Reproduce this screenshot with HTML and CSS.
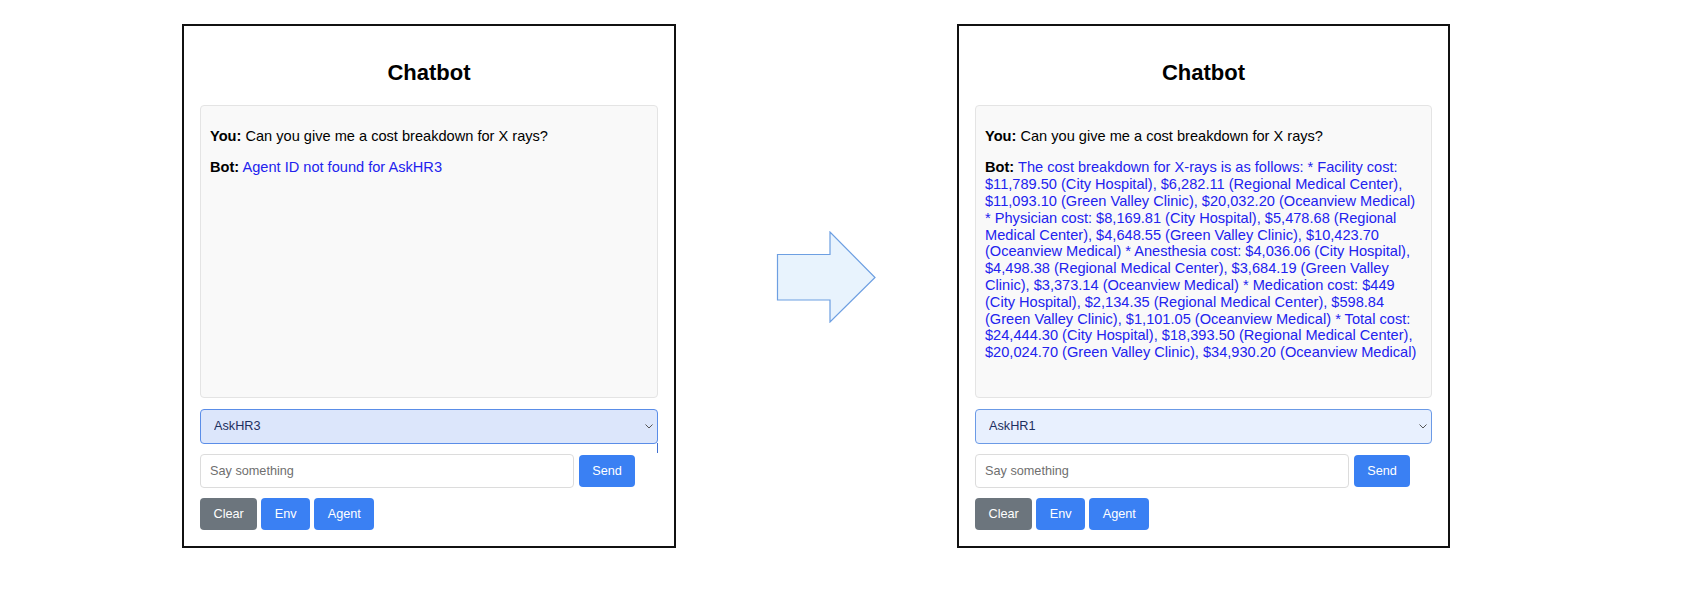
FILE: index.html
```html
<!DOCTYPE html>
<html lang="en">
<head>
<meta charset="utf-8">
<title>Chatbot comparison</title>
<link rel="stylesheet" href="styles.css">
</head>
<body>
<div class="stage">
  <section class="panel">
    <h2 class="title">Chatbot</h2>
    <div class="chat">
      <p class="msg"><b>You:</b> Can you give me a cost breakdown for X rays?</p>
      <p class="msg"><b>Bot:</b> <span class="bot">Agent ID not found for AskHR3</span></p>
    </div>
    <div class="select-wrap focused">
      <select class="agent-select focus-bg"><option>AskHR3</option></select>
      <svg class="chev" width="8" height="5" viewBox="0 0 8 5"><path d="M0.5 0.5 L4 4 L7.5 0.5" fill="none" stroke="#555" stroke-width="1"/></svg>
    </div>
    <div class="input-row">
      <input class="say" type="text" placeholder="Say something">
      <button class="btn primary">Send</button>
    </div>
    <div class="btn-row">
      <button class="btn secondary">Clear</button>
      <button class="btn primary">Env</button>
      <button class="btn primary">Agent</button>
    </div>
  </section>

  <svg class="arrow" width="100" height="92" viewBox="0 0 100 92">
    <polygon points="1.5,23.5 54,23.5 54,1 99,46.5 54,91 54,69 1.5,69" fill="#e8f3fd" stroke="#6d9fe2" stroke-width="1.2"/>
  </svg>

  <section class="panel panel-right">
    <h2 class="title">Chatbot</h2>
    <div class="chat">
      <p class="msg"><b>You:</b> Can you give me a cost breakdown for X rays?</p>
      <p class="msg"><b>Bot:</b> <span class="bot">The cost breakdown for X-rays is as follows: * Facility cost: $11,789.50 (City Hospital), $6,282.11 (Regional Medical Center), $11,093.10 (Green Valley Clinic), $20,032.20 (Oceanview Medical) * Physician cost: $8,169.81 (City Hospital), $5,478.68 (Regional Medical Center), $4,648.55 (Green Valley Clinic), $10,423.70 (Oceanview Medical) * Anesthesia cost: $4,036.06 (City Hospital), $4,498.38 (Regional Medical Center), $3,684.19 (Green Valley Clinic), $3,373.14 (Oceanview Medical) * Medication cost: $449 (City Hospital), $2,134.35 (Regional Medical Center), $598.84 (Green Valley Clinic), $1,101.05 (Oceanview Medical) * Total cost: $24,444.30 (City Hospital), $18,393.50 (Regional Medical Center), $20,024.70 (Green Valley Clinic), $34,930.20 (Oceanview Medical)</span></p>
    </div>
    <div class="select-wrap">
      <select class="agent-select"><option>AskHR1</option></select>
      <svg class="chev" width="8" height="5" viewBox="0 0 8 5"><path d="M0.5 0.5 L4 4 L7.5 0.5" fill="none" stroke="#555" stroke-width="1"/></svg>
    </div>
    <div class="input-row">
      <input class="say" type="text" placeholder="Say something">
      <button class="btn primary">Send</button>
    </div>
    <div class="btn-row">
      <button class="btn secondary">Clear</button>
      <button class="btn primary">Env</button>
      <button class="btn primary">Agent</button>
    </div>
  </section>
</div>
</body>
</html>
```

FILE: styles.css
```css
html, body {
  margin: 0;
  padding: 0;
  background: #ffffff;
}

body {
  font-family: "Liberation Sans", Arial, Helvetica, sans-serif;
  color: #000;
}

.stage {
  display: flex;
  align-items: flex-start;
  padding: 24px 0 0 182px;
}

.panel {
  box-sizing: border-box;
  width: 494px;
  flex: 0 0 auto;
  border: 2px solid #111;
  padding: 16px;
  display: flex;
  flex-direction: column;
  background: #fff;
}

.panel-right {
  width: 493px;
  margin-left: 81px;
}

.title {
  font-size: 22px;
  font-weight: bold;
  text-align: center;
  margin: 18.3px 0;
  line-height: normal;
}

.chat {
  box-sizing: border-box;
  height: 293px;
  background: #f9f9f9;
  border: 1px solid #e4e4e4;
  border-radius: 4px;
  padding: 0 9px;
  overflow: hidden;
}

.msg {
  font-size: 14.6px;
  line-height: 16.8px;
  margin: 14.6px 0;
}

.msg:first-child {
  margin-top: 22.5px;
}

.bot {
  color: #2222ee;
}

.select-wrap {
  position: relative;
  margin-top: 11px;
}

.agent-select {
  -webkit-appearance: none;
  appearance: none;
  box-sizing: border-box;
  width: 100%;
  height: 35px;
  border: 1px solid #6b9ae6;
  border-radius: 4px;
  background: #e8f0fe;
  color: #1c2f60;
  font-family: "Liberation Sans", Arial, sans-serif;
  font-size: 12.7px;
  padding: 0 13px;
  margin: 0;
  display: block;
}

.focus-bg {
  background: #dce6fb;
  border-color: #5a8de8;
}

.focused::after {
  content: "";
  position: absolute;
  right: 0;
  top: 34px;
  width: 1px;
  height: 10px;
  background: #3f6fd0;
}

.chev {
  position: absolute;
  right: 5px;
  top: 15px;
}

.input-row {
  display: flex;
  align-items: center;
  margin-top: 10px;
}

.say {
  box-sizing: border-box;
  flex: 0 0 374px;
  height: 34px;
  border: 1px solid #dcdcdc;
  border-radius: 4px;
  padding: 0 9px;
  font-family: "Liberation Sans", Arial, sans-serif;
  font-size: 12.7px;
  background: #fff;
  margin: 0;
}

.say::placeholder {
  color: #6f6f6f;
}

.input-row .btn {
  margin-left: 5px;
  width: 56px;
  padding: 0;
}

.btn-row {
  display: flex;
  gap: 4px;
  margin-top: 10px;
}

.btn {
  box-sizing: border-box;
  height: 32px;
  border: none;
  border-radius: 4px;
  padding: 0 13.5px;
  font-family: "Liberation Sans", Arial, sans-serif;
  font-size: 12.7px;
  color: #fff;
  margin: 0;
}

.primary {
  background: #3a80f3;
}

.secondary {
  background: #6c757d;
}

.arrow {
  display: block;
  flex: 0 0 auto;
  margin-left: 100px;
  margin-top: 207px;
}
```
